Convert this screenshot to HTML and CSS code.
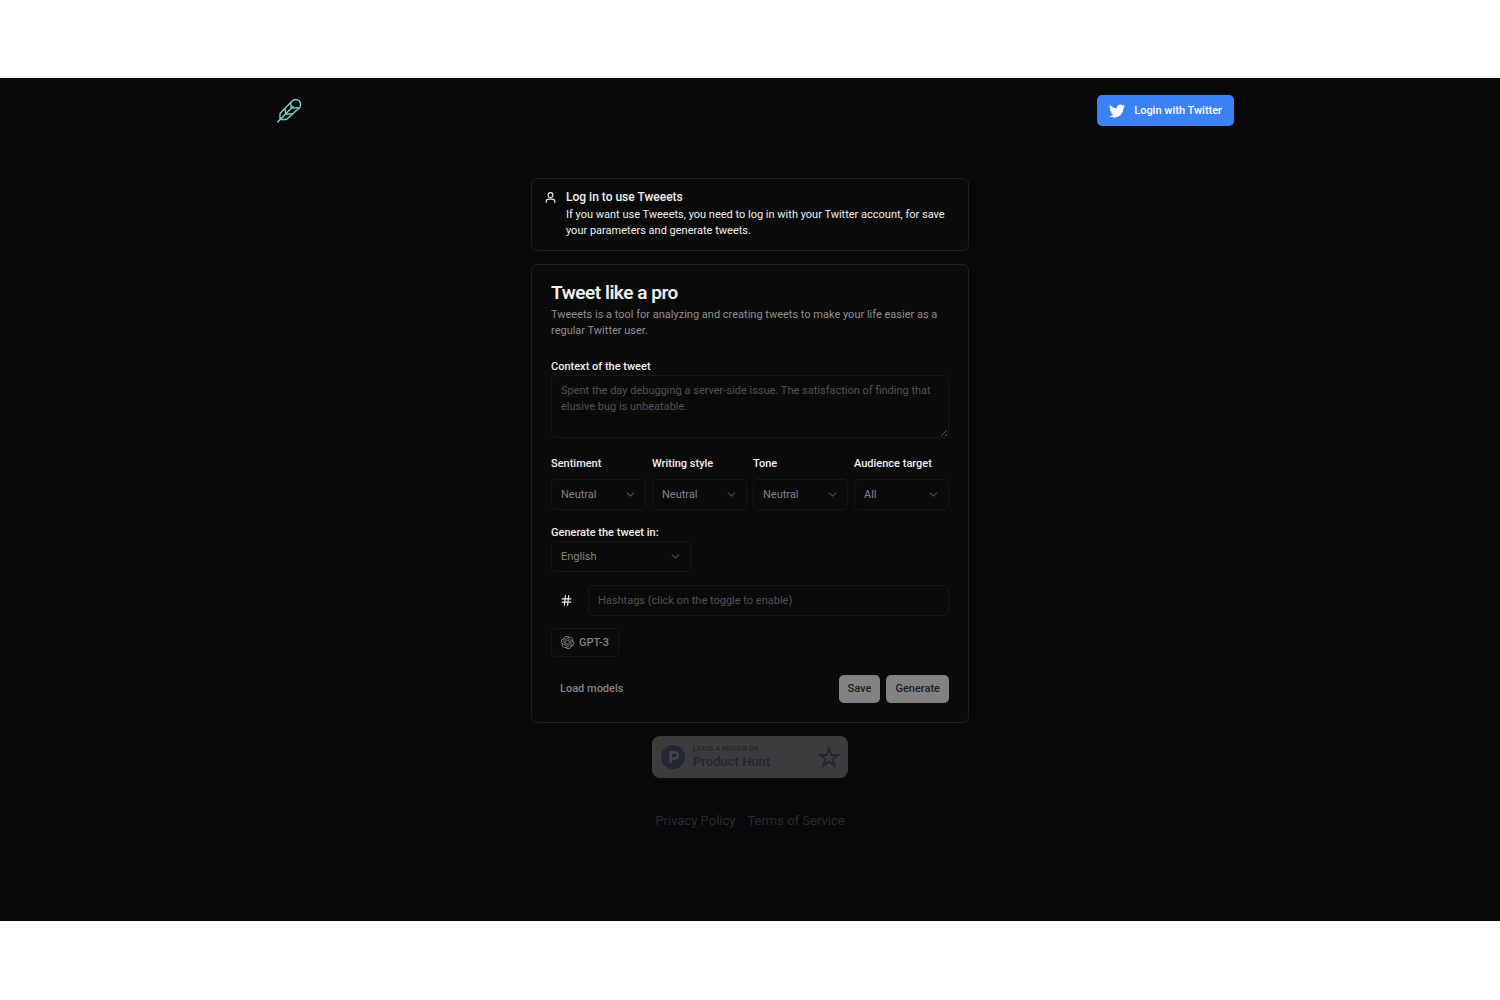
FILE: index.html
```
<!DOCTYPE html>
<html lang="en">

<head>
    <meta charset="UTF-8">
    <meta name="viewport" content="width=device-width, initial-scale=1.0">
    <title>Tweeets</title>
    <link rel="stylesheet" href="styles.css">
</head>

<body>
    <div class="page">
        <header class="navbar">
            <a href="#" class="logo" aria-label="Tweeets">
                <svg viewBox="0 0 26 26" width="26" height="26" fill="none" stroke="#7fd0c6" stroke-width="1.4" stroke-linecap="round" stroke-linejoin="round">
                    <path d="M1.5 24 17 8.5M4 21.5v-6L16.2 3a4.9 4.9 0 0 1 7 7L10.5 21.5z" />
                    <path d="M9 10.4l.8 5.8 7.4-.6M14.6 4.7l.8 5.4 6.6-.4" />
                </svg>
            </a>
            <button type="button" class="btn btn-twitter">
                <svg viewBox="0 0 24 24" width="16" height="16" fill="currentColor">
                    <path d="M23.953 4.57a10 10 0 01-2.825.775 4.958 4.958 0 002.163-2.723c-.951.555-2.005.959-3.127 1.184a4.92 4.92 0 00-8.384 4.482C7.69 8.095 4.067 6.13 1.64 3.162a4.822 4.822 0 00-.666 2.475c0 1.71.87 3.213 2.188 4.096a4.904 4.904 0 01-2.228-.616v.06a4.923 4.923 0 003.946 4.827 4.996 4.996 0 01-2.212.085 4.936 4.936 0 004.604 3.417 9.867 9.867 0 01-6.102 2.105c-.39 0-.779-.023-1.17-.067a13.995 13.995 0 007.557 2.209c9.053 0 13.998-7.496 13.998-13.985 0-.21 0-.42-.015-.63A9.935 9.935 0 0024 4.59z" />
                </svg>
                Login with Twitter
            </button>
        </header>

        <main class="content">
            <!-- Login notice -->
            <section class="alert">
                <svg class="alert-icon" viewBox="0 0 24 24" width="13" height="13" fill="none" stroke="currentColor" stroke-width="2" stroke-linecap="round" stroke-linejoin="round">
                    <circle cx="12" cy="7.5" r="4.5" />
                    <path d="M20 21v-1a5 5 0 0 0-5-5H9a5 5 0 0 0-5 5v1" />
                </svg>
                <div>
                    <h5>Log in to use Tweeets</h5>
                    <p>If you want use Tweeets, you need to log in with your Twitter account, for save your parameters and generate tweets.</p>
                </div>
            </section>

            <!-- Tweet form -->
            <form class="card">
                <div class="card-header">
                    <h1>Tweet like a pro</h1>
                    <p>Tweeets is a tool for analyzing and creating tweets to make your life easier as a regular Twitter user.</p>
                </div>

                <div class="field">
                    <label for="context">Context of the tweet</label>
                    <textarea id="context" disabled placeholder="Spent the day debugging a server-side issue. The satisfaction of finding that elusive bug is unbeatable."></textarea>
                </div>

                <div class="options">
                    <div class="option">
                        <label for="sentiment">Sentiment</label>
                        <div class="select">
                            <select id="sentiment" disabled><option>Neutral</option></select>
                            <svg viewBox="0 0 24 24"><path d="m6 9 6 6 6-6" /></svg>
                        </div>
                    </div>
                    <div class="option">
                        <label for="style">Writing style</label>
                        <div class="select">
                            <select id="style" disabled><option>Neutral</option></select>
                            <svg viewBox="0 0 24 24"><path d="m6 9 6 6 6-6" /></svg>
                        </div>
                    </div>
                    <div class="option">
                        <label for="tone">Tone</label>
                        <div class="select">
                            <select id="tone" disabled><option>Neutral</option></select>
                            <svg viewBox="0 0 24 24"><path d="m6 9 6 6 6-6" /></svg>
                        </div>
                    </div>
                    <div class="option">
                        <label for="audience">Audience target</label>
                        <div class="select">
                            <select id="audience" disabled><option>All</option></select>
                            <svg viewBox="0 0 24 24"><path d="m6 9 6 6 6-6" /></svg>
                        </div>
                    </div>
                </div>

                <div class="field language">
                    <label for="language">Generate the tweet in:</label>
                    <div class="select">
                        <select id="language" disabled><option>English</option></select>
                        <svg viewBox="0 0 24 24"><path d="m6 9 6 6 6-6" /></svg>
                    </div>
                </div>

                <div class="hashtags">
                    <button type="button" class="toggle" aria-label="Toggle hashtags">
                        <svg viewBox="0 0 24 24" width="13" height="13" fill="none" stroke="currentColor" stroke-width="2" stroke-linecap="round" stroke-linejoin="round">
                            <path d="M4 9h16M4 15h16M10 3 8 21M16 3l-2 18" />
                        </svg>
                    </button>
                    <input type="text" aria-label="Hashtags" placeholder="Hashtags (click on the toggle to enable)" disabled>
                </div>

                <button type="button" class="btn btn-outline" disabled>
                    <svg viewBox="0 0 24 24" width="13" height="13" fill="currentColor">
                        <path d="M22.2819 9.8211a5.9847 5.9847 0 0 0-.5157-4.9108 6.0462 6.0462 0 0 0-6.5098-2.9A6.0651 6.0651 0 0 0 4.9807 4.1818a5.9847 5.9847 0 0 0-3.9977 2.9 6.0462 6.0462 0 0 0 .7427 7.0966 5.98 5.98 0 0 0 .511 4.9107 6.051 6.051 0 0 0 6.5146 2.9001A5.9847 5.9847 0 0 0 13.2599 24a6.0557 6.0557 0 0 0 5.7718-4.2058 5.9894 5.9894 0 0 0 3.9977-2.9001 6.0557 6.0557 0 0 0-.7475-7.073zm-9.022 12.6081a4.4755 4.4755 0 0 1-2.8764-1.0408l.1419-.0804 4.7783-2.7582a.7948.7948 0 0 0 .3927-.6813v-6.7369l2.02 1.1686a.071.071 0 0 1 .038.052v5.5826a4.504 4.504 0 0 1-4.4945 4.4944zm-9.6607-4.1254a4.4708 4.4708 0 0 1-.5346-3.0137l.142.0852 4.783 2.7582a.7712.7712 0 0 0 .7806 0l5.8428-3.3685v2.3324a.0804.0804 0 0 1-.0332.0615L9.74 19.9502a4.4992 4.4992 0 0 1-6.1408-1.6464zM2.3408 7.8956a4.485 4.485 0 0 1 2.3655-1.9728V11.6a.7664.7664 0 0 0 .3879.6765l5.8144 3.3543-2.0201 1.1685a.0757.0757 0 0 1-.071 0l-4.8303-2.7865A4.504 4.504 0 0 1 2.3408 7.872zm16.5963 3.8558L13.1038 8.364 15.1192 7.2a.0757.0757 0 0 1 .071 0l4.8303 2.7913a4.4944 4.4944 0 0 1-.6765 8.1042v-5.6772a.79.79 0 0 0-.407-.667zm2.0107-3.0231l-.142-.0852-4.7735-2.7818a.7759.7759 0 0 0-.7854 0L9.409 9.2297V6.8974a.0662.0662 0 0 1 .0284-.0615l4.8303-2.7866a4.4992 4.4992 0 0 1 6.6802 4.66zM8.3065 12.863l-2.02-1.1638a.0804.0804 0 0 1-.038-.0567V6.0742a4.4992 4.4992 0 0 1 7.3757-3.4537l-.142.0805L8.704 5.459a.7948.7948 0 0 0-.3927.6813zm1.0976-2.3654l2.602-1.4998 2.6069 1.4998v2.9994l-2.5974 1.4997-2.6067-1.4997Z" />
                    </svg>
                    GPT-3
                </button>

                <div class="card-footer">
                    <button type="button" class="btn btn-ghost" disabled>Load models</button>
                    <div class="actions">
                        <button type="button" class="btn btn-primary" disabled>Save</button>
                        <button type="submit" class="btn btn-primary" disabled>Generate</button>
                    </div>
                </div>
            </form>

            <a href="#" class="review">
                <svg viewBox="0 0 24 24" width="24" height="24">
                    <circle cx="12" cy="12" r="12" fill="#242733" />
                    <path d="M9.5 18V7.2h4.2a3.2 3.2 0 0 1 0 6.4H9.5" fill="none" stroke="#464649" stroke-width="2.4" />
                </svg>
                <span class="review-text">
                    <small>LEAVE A REVIEW ON</small>
                    <strong>Product Hunt</strong>
                </span>
                <svg viewBox="0 0 24 24" width="24" height="24" fill="none" stroke="#242733" stroke-width="2">
                    <path d="m12 3.500 2.200 6.400h6.700l-5.400 4.100 2 6.500-5.500-3.900-5.500 3.900 2-6.500-5.400-4.100h6.700z" />
                </svg>
            </a>
        </main>

        <footer class="footer">
            <a href="#">Privacy Policy</a>
            <a href="#">Terms of Service</a>
        </footer>
    </div>
</body>

</html>
```
FILE: styles.css
```
* {
    box-sizing: border-box;
}

body {
    margin: 0;
    padding: 78px 0;
    background: #fff;
    font-family: Roboto, "Liberation Sans", sans-serif;
    font-size: 11px;
    line-height: 16px;
    color: #f0f0f0;
}

h1, h5, p {
    margin: 0;
}

a {
    color: inherit;
    text-decoration: none;
}

button, input, select, textarea {
    font: inherit;
    color: inherit;
}

.page {
    background: #08080a;
    color-scheme: dark;
}

/* Top bar */
.navbar {
    display: flex;
    justify-content: space-between;
    align-items: center;
    max-width: 990px;
    margin: 0 auto;
    padding: 17px 11px;
}

.logo {
    display: flex;
    padding-left: 10px;
}

.btn {
    display: inline-flex;
    align-items: center;
    justify-content: center;
    height: 28px;
    padding: 0 9px;
    border: 1px solid transparent;
    border-radius: 5px;
    background: transparent;
    font-weight: 500;
    white-space: nowrap;
}

.btn-twitter {
    height: 31px;
    padding: 0 11px;
    gap: 9px;
    background: #3b82f6;
    color: #fff;
}

/* Main column */
.content {
    display: flex;
    flex-direction: column;
    gap: 13px;
    max-width: 438px;
    margin: 0 auto;
    padding-top: 35px;
}

.alert {
    display: flex;
    gap: 9px;
    padding: 11px 12px;
    border: 1px solid #1e1e20;
    border-radius: 6px;
    background: #0a0a0a;
}

.alert-icon {
    flex: none;
    margin-top: 1px;
}

.alert h5 {
    font-size: 12px;
    font-weight: 500;
    line-height: 14px;
    margin-bottom: 3px;
}

.card {
    display: flex;
    flex-direction: column;
    padding: 19px;
    border: 1px solid #1e1e20;
    border-radius: 6px;
    background: #0a0a0a;
}

.card-header {
    margin-bottom: 20px;
}

.card h1 {
    font-size: 19px;
    font-weight: 600;
    line-height: 18px;
    letter-spacing: -0.025em;
    margin-bottom: 5px;
}

.card-header p {
    color: #8f8f8f;
}

.card label {
    font-weight: 500;
}

.field {
    display: flex;
    flex-direction: column;
}

.card textarea,
.card input,
.card select {
    width: 100%;
    border: 1px solid #232324;
    border-radius: 5px;
    background: transparent;
    padding: 0 9px;
    margin: 0;
}

.card textarea,
.card input {
    opacity: 0.5;
}

.card textarea {
    display: block;
    height: 63px;
    padding-top: 7px;
    resize: vertical;
}

.card ::placeholder {
    color: #989898;
    opacity: 1;
}

.card input {
    height: 31px;
}

/* Select with its own chevron */
.select {
    position: relative;
}

.card select {
    display: block;
    height: 31px;
    border-color: #161617;
    appearance: none;
    color: #838383;
    opacity: 1;
}

.select svg {
    position: absolute;
    top: 9px;
    right: 9px;
    width: 13px;
    height: 13px;
    fill: none;
    stroke: #4a4a4a;
    stroke-width: 2;
    stroke-linecap: round;
    stroke-linejoin: round;
    pointer-events: none;
}

.options {
    display: grid;
    grid-template-columns: repeat(4, 1fr);
    gap: 6px;
    margin: 18px 0 15px;
}

.option {
    display: flex;
    flex-direction: column;
    gap: 7px;
}

.language .select {
    width: 140px;
}

.hashtags {
    display: flex;
    gap: 6px;
    margin: 13px 0 12px;
}

.toggle {
    display: flex;
    flex: none;
    align-items: center;
    justify-content: center;
    width: 31px;
    padding: 0;
    border: 0;
    background: transparent;
}

.btn-outline {
    align-self: flex-start;
    gap: 5px;
    height: 29px;
    border-color: #161617;
    color: #838383;
}

.card-footer {
    display: flex;
    justify-content: space-between;
    margin-top: 18px;
}

.actions {
    display: flex;
    gap: 6px;
}

.btn-ghost {
    padding: 0 8px;
    color: #838383;
}

.btn-primary {
    padding: 0 8px;
    background: #828282;
    color: #202020;
}

/* Product Hunt badge */
.review {
    display: flex;
    align-items: center;
    align-self: center;
    gap: 8px;
    width: 196px;
    height: 42px;
    padding: 0 7px 0 9px;
    border-radius: 8px;
    background: #3c3c3e;
    color: #242733;
}

.review-text {
    display: flex;
    flex: 1;
    flex-direction: column;
}

.review small {
    font-size: 7px;
    font-weight: 700;
    line-height: 10px;
}

.review strong {
    font-size: 13px;
    font-weight: 600;
    line-height: 16px;
}

.footer {
    display: flex;
    justify-content: center;
    gap: 12px;
    padding: 35px 0 92px;
    font-size: 13px;
    color: #2b2b2e;
}
```
